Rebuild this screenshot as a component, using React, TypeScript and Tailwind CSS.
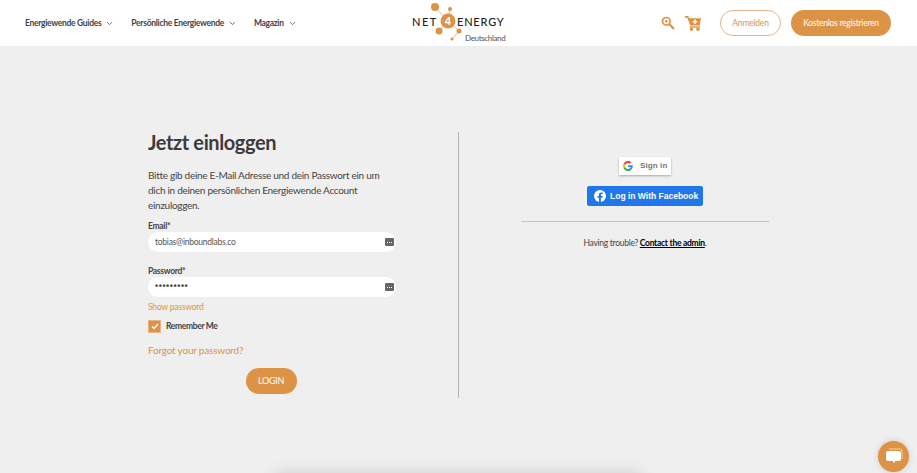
import React from "react";
import { ChevronDown } from "lucide-react";

function Nav({ label }: { label: string }) {
  return (
    <div className="flex items-center gap-[4px] whitespace-nowrap">
      <span className="text-[8.500px] font-bold text-[#444] tracking-[-0.3px]">{label}</span>
      <ChevronDown size={9} strokeWidth={2.200} className="text-[#555]" />
    </div>
  );
}

function Dots() {
  return (
    <span className="w-[9px] h-[8px] rounded-[1px] bg-[#666] flex items-center justify-center gap-[1px]">
      <i className="w-[1px] h-[1px] bg-white" />
      <i className="w-[1px] h-[1px] bg-white" />
      <i className="w-[1px] h-[1px] bg-white" />
    </span>
  );
}

function Logo() {
  return (
    <div className="relative w-[95px] h-[42px]">
      <svg width="95" height="42" viewBox="0 0 95 42" className="absolute inset-0">
        <g stroke="#e4b78c" strokeWidth="1">
          <line x1="24" y1="5" x2="37" y2="19" />
          <line x1="37" y1="19" x2="39" y2="7" />
          <line x1="28" y1="29" x2="37" y2="19" />
          <line x1="37" y1="19" x2="48" y2="29" />
          <line x1="48" y1="29" x2="41" y2="37" />
        </g>
        <circle cx="24" cy="5" r="4" fill="#dd9345" />
        <circle cx="39" cy="7" r="2" fill="#dd9345" />
        <circle cx="28" cy="29" r="3.500" fill="#dd9345" />
        <circle cx="48" cy="29" r="2.500" fill="#dd9345" />
        <circle cx="41" cy="37" r="1.500" fill="#dd9345" />
        <circle cx="37" cy="19" r="7.500" fill="#dd9345" />
      </svg>
      <span className="absolute left-[1px] top-[13px] text-[11px] leading-[13px] font-medium text-[#222] tracking-[1.500px]">NET</span>
      <span className="absolute left-[32px] top-[13px] w-[10px] text-center text-[11px] leading-[12px] font-bold text-white">4</span>
      <span className="absolute left-[46px] top-[13px] text-[11px] leading-[13px] font-medium text-[#222] tracking-[0.800px]">ENERGY</span>
      <span className="absolute left-[54px] top-[30px] text-[8px] leading-[12px] text-[#555] tracking-[-0.350px] whitespace-nowrap">Deutschland</span>
    </div>
  );
}

function GoogleG() {
  return (
    <svg width="10" height="10" viewBox="0 0 48 48">
      <path fill="#EA4335" d="M24 9.500c3.500 0 6.700 1.200 9.200 3.600l6.900-6.900C35.900 2.400 30.400 0 24 0 14.600 0 6.500 5.400 2.600 13.200l8 6.200C12.500 13.700 17.800 9.500 24 9.500z" />
      <path fill="#4285F4" d="M47 24.500c0-1.600-.1-3.100-.4-4.500H24v9h13c-.6 3-2.300 5.500-4.800 7.200l7.700 6C44.400 37.900 47 31.800 47 24.500z" />
      <path fill="#FBBC05" d="M10.600 28.600c-.5-1.400-.8-3-.8-4.600s.3-3.200.8-4.600l-8-6.200C.9 16.500 0 20.100 0 24s.9 7.500 2.600 10.800l8-6.200z" />
      <path fill="#34A853" d="M24 48c6.500 0 11.900-2.100 15.900-5.800l-7.700-6c-2.200 1.500-4.900 2.300-8.200 2.300-6.200 0-11.500-4.200-13.400-9.900l-8 6.200C6.500 42.600 14.600 48 24 48z" />
    </svg>
  );
}

export default function App() {
  return (
    <div className="h-[473px] w-full overflow-hidden bg-[#efefef] flex flex-col font-['Lato',sans-serif] relative">
      <header className="h-[46px] bg-white flex items-center justify-between pl-[25px] pr-[26px] shrink-0 relative">
        <nav className="flex items-center gap-[17px]">
          <Nav label="Energiewende Guides" />
          <Nav label="Persönliche Energiewende" />
          <Nav label="Magazin" />
        </nav>
        <div className="absolute left-[411px] top-[2px]"><Logo /></div>
        <div className="flex items-center">
          <svg width="14" height="14" viewBox="0 0 14 14" fill="none" className="mr-[10px]">
            <circle cx="5.300" cy="5.300" r="3.800" stroke="#dd9345" strokeWidth="1.700" />
            <circle cx="5.300" cy="5.300" r="1.300" fill="#dd9345" />
            <path d="M8.300 8.300 13 13" stroke="#dd9345" strokeWidth="2.200" />
          </svg>
          <svg width="16" height="15" viewBox="0 0 16 15" className="mr-[19px]">
            <path d="M0 0h3.400l.7 2.300H16l-1.300 7.200H5.200L2.400 1.700H0z" fill="#dd9345" />
            <path d="M9.300 3.600h1.500v1.500h1.500v1.400h-1.500V8H9.300V6.500H7.800V5.100h1.500z" fill="#fff" />
            <rect x="4.500" y="10.300" width="10.500" height="1.400" fill="#dd9345" />
            <circle cx="6.500" cy="13.200" r="1.700" fill="#dd9345" />
            <circle cx="13" cy="13.200" r="1.700" fill="#dd9345" />
          </svg>
          <button className="w-[61px] h-[26px] rounded-full border border-[#e6b48a] bg-white text-[#dd9345] text-[8.500px] tracking-[-0.200px] whitespace-nowrap">Anmelden</button>
          <button className="w-[100px] h-[26px] rounded-full bg-[#dd9345] text-white text-[8.500px] tracking-[-0.250px] ml-[10px] whitespace-nowrap">Kostenlos registrieren</button>
        </div>
      </header>

      <main className="flex pt-[86px] pl-[148px]">
        <section className="w-[248px] shrink-0 text-[#444]">
          <h1 className="text-[20px] leading-[21px] font-bold text-[#3c3c3c] tracking-[-0.400px] whitespace-nowrap">Jetzt einloggen</h1>
          <p className="mt-[15px] text-[10px] leading-[15px] tracking-[-0.290px] w-[240px]">Bitte gib deine E-Mail Adresse und dein Passwort ein um dich in deinen persönlichen Energiewende Account einzuloggen.</p>
          <label className="block mt-[7px] text-[8.500px] leading-[12px] font-bold tracking-[-0.300px]">Email*</label>
          <div className="h-[20px] rounded-full bg-white flex items-center justify-between pl-[7px] pr-[2px]">
            <span className="text-[8.500px] text-[#555] tracking-[-0.250px]">tobias@inboundlabs.co</span><Dots />
          </div>
          <label className="block mt-[13px] text-[8.500px] leading-[12px] font-bold tracking-[-0.300px]">Password*</label>
          <div className="h-[20px] rounded-full bg-white flex items-center justify-between pl-[7px] pr-[2px]">
            <span className="text-[9px] font-bold font-['Liberation_Sans',sans-serif] text-[#444] tracking-[0.550px]">•••••••••</span><Dots />
          </div>
          <a className="block mt-[4px] text-[8.500px] leading-[12px] text-[#dd9345] tracking-[-0.200px]">Show password</a>
          <div className="mt-[7px] flex items-center gap-[5px]">
            <span className="w-[13px] h-[13px] bg-[#dd9345] border border-[#e6b48a] flex items-center justify-center">
              <svg width="8" height="7" viewBox="0 0 8 7" fill="none"><path d="M1 3.500 3 5.500 7 1" stroke="#fff" strokeWidth="1.400" /></svg>
            </span>
            <span className="text-[8.500px] font-bold tracking-[-0.350px]">Remember Me</span>
          </div>
          <a className="block mt-[10px] text-[10px] leading-[14px] text-[#dd9345] tracking-[-0.200px]">Forgot your password?</a>
          <div className="flex justify-center mt-[11px] pr-[2px]">
            <button className="w-[51px] h-[26px] rounded-full bg-[#dd9345] text-white text-[9px] tracking-[-0.300px]">LOGIN</button>
          </div>
        </section>

        <div className="w-[1px] h-[266px] bg-[#b5b5b5] ml-[62px] shrink-0" />

        <section className="w-[248px] ml-[62px] shrink-0 flex flex-col items-center pt-[25px]">
          <button className="w-[52px] h-[18px] bg-white shadow-[0_1px_2px_rgba(0,0,0,0.3)] flex items-center gap-[7px] pl-[4px]">
            <GoogleG /><span className="text-[8px] font-bold font-['Liberation_Sans',sans-serif] text-[#777] tracking-[0.100px] whitespace-nowrap">Sign in</span>
          </button>
          <button className="mt-[11px] w-[116px] h-[20px] rounded-[2px] bg-[#2176ea] flex items-center gap-[4px] pl-[7px]">
            <svg width="12" height="12" viewBox="0 0 24 24" className="shrink-0"><circle cx="12" cy="12" r="12" fill="#fff" /><path fill="#2176ea" d="M16.700 15.500 17.200 12h-3.400V9.800c0-1 .5-1.900 2-1.900h1.500V5s-1.400-.2-2.700-.2c-2.800 0-4.600 1.700-4.600 4.700V12H7v3.500h3V24h3.800v-8.500z" /></svg>
            <span className="text-[8.500px] font-bold font-['Liberation_Sans',sans-serif] text-white whitespace-nowrap">Log in With Facebook</span>
          </button>
          <div className="mt-[15px] w-full h-[1px] bg-[#c4c4c4]" />
          <p className="mt-[15px] text-[8.500px] leading-[12px] text-[#444] tracking-[-0.280px] whitespace-nowrap">Having trouble? <a className="font-bold text-black underline">Contact the admin</a>.</p>
        </section>
      </main>

      <div className="absolute left-[275px] top-[476px] w-[365px] h-[40px] shadow-[0_0_18px_rgba(0,0,0,0.2)]" />

      <button className="absolute left-[878px] top-[441px] w-[31px] h-[31px] rounded-full bg-[#dd9345] shadow-[0_0_6px_rgba(0,0,0,0.15)] flex items-center justify-center">
        <svg width="18" height="17" viewBox="0 0 18 17">
          <path d="M4 1h11a2 2 0 0 1 2 2v8" fill="none" stroke="#f3d3ae" strokeWidth="1" />
          <path d="M3 3h11a2 2 0 0 1 2 2v6a2 2 0 0 1-2 2h-3.500L9 15l-1.500-2H3a2 2 0 0 1-2-2V5a2 2 0 0 1 2-2z" fill="#fff" />
        </svg>
      </button>
    </div>
  );
}
